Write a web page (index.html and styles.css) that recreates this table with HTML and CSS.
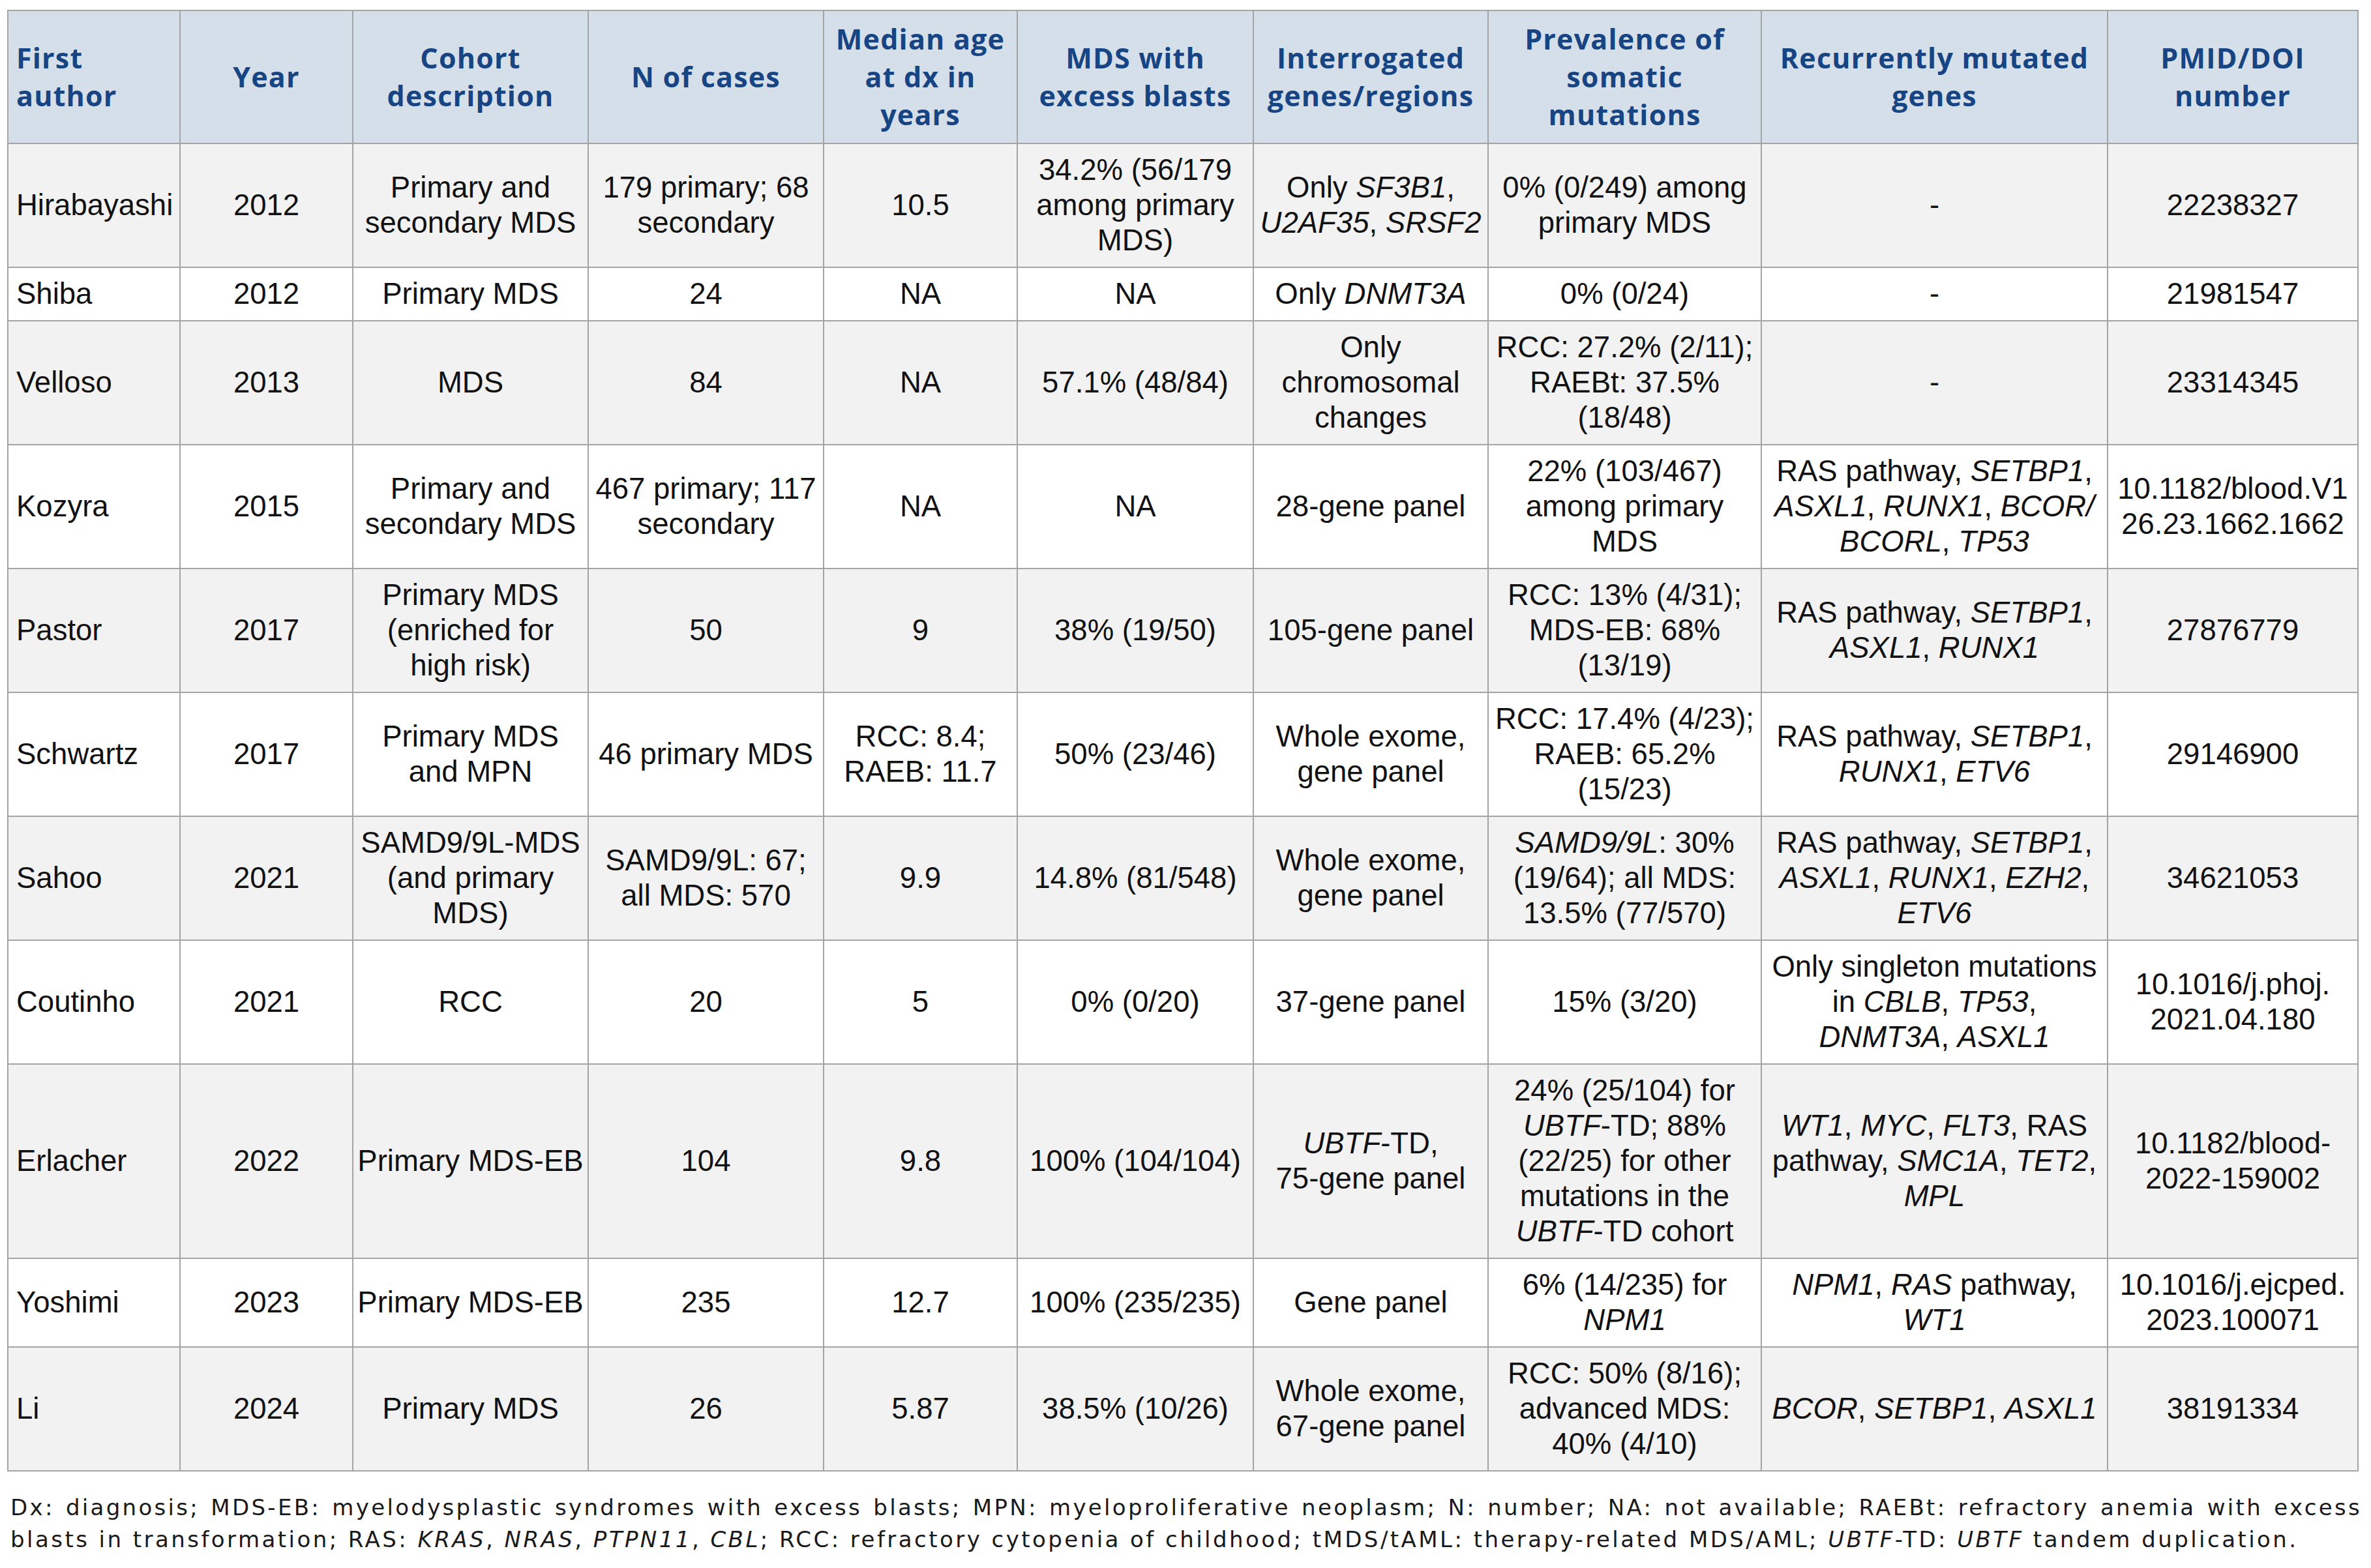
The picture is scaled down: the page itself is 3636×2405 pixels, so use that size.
FILE: index.html
```html
<!DOCTYPE html>
<html lang="en">
<head>
<meta charset="utf-8">
<title>Studies of somatic mutations in pediatric MDS</title>
<link rel="stylesheet" href="styles.css">
</head>
<body>
<div class="page">
<table class="data">
  <colgroup>
    <col class="c1"><col class="c2"><col class="c3"><col class="c4"><col class="c5">
    <col class="c6"><col class="c7"><col class="c8"><col class="c9"><col class="c10">
  </colgroup>
  <thead>
    <tr>
      <th class="left">First<br>author</th>
      <th>Year</th>
      <th>Cohort<br>description</th>
      <th>N of cases</th>
      <th>Median age<br>at dx in<br>years</th>
      <th>MDS with<br>excess blasts</th>
      <th>Interrogated<br>genes/regions</th>
      <th>Prevalence of<br>somatic<br>mutations</th>
      <th>Recurrently mutated<br>genes</th>
      <th>PMID/DOI<br>number</th>
    </tr>
  </thead>
  <tbody>
    <tr>
      <td class="left">Hirabayashi</td>
      <td>2012</td>
      <td>Primary and<br>secondary MDS</td>
      <td>179 primary; 68<br>secondary</td>
      <td>10.5</td>
      <td>34.2% (56/179<br>among primary<br>MDS)</td>
      <td>Only <i>SF3B1</i>,<br><i>U2AF35</i>, <i>SRSF2</i></td>
      <td>0% (0/249) among<br>primary MDS</td>
      <td>-</td>
      <td>22238327</td>
    </tr>
    <tr>
      <td class="left">Shiba</td>
      <td>2012</td>
      <td>Primary MDS</td>
      <td>24</td>
      <td>NA</td>
      <td>NA</td>
      <td>Only <i>DNMT3A</i></td>
      <td>0% (0/24)</td>
      <td>-</td>
      <td>21981547</td>
    </tr>
    <tr>
      <td class="left">Velloso</td>
      <td>2013</td>
      <td>MDS</td>
      <td>84</td>
      <td>NA</td>
      <td>57.1% (48/84)</td>
      <td>Only<br>chromosomal<br>changes</td>
      <td>RCC: 27.2% (2/11);<br>RAEBt: 37.5%<br>(18/48)</td>
      <td>-</td>
      <td>23314345</td>
    </tr>
    <tr>
      <td class="left">Kozyra</td>
      <td>2015</td>
      <td>Primary and<br>secondary MDS</td>
      <td>467 primary; 117<br>secondary</td>
      <td>NA</td>
      <td>NA</td>
      <td>28-gene panel</td>
      <td>22% (103/467)<br>among primary<br>MDS</td>
      <td>RAS pathway, <i>SETBP1</i>,<br><i>ASXL1</i>, <i>RUNX1</i>, <i>BCOR/</i><br><i>BCORL</i>, <i>TP53</i></td>
      <td>10.1182/blood.V1<br>26.23.1662.1662</td>
    </tr>
    <tr>
      <td class="left">Pastor</td>
      <td>2017</td>
      <td>Primary MDS<br>(enriched for<br>high risk)</td>
      <td>50</td>
      <td>9</td>
      <td>38% (19/50)</td>
      <td>105-gene panel</td>
      <td>RCC: 13% (4/31);<br>MDS-EB: 68%<br>(13/19)</td>
      <td>RAS pathway, <i>SETBP1</i>,<br><i>ASXL1</i>, <i>RUNX1</i></td>
      <td>27876779</td>
    </tr>
    <tr>
      <td class="left">Schwartz</td>
      <td>2017</td>
      <td>Primary MDS<br>and MPN</td>
      <td>46 primary MDS</td>
      <td>RCC: 8.4;<br>RAEB: 11.7</td>
      <td>50% (23/46)</td>
      <td>Whole exome,<br>gene panel</td>
      <td>RCC: 17.4% (4/23);<br>RAEB: 65.2%<br>(15/23)</td>
      <td>RAS pathway, <i>SETBP1</i>,<br><i>RUNX1</i>, <i>ETV6</i></td>
      <td>29146900</td>
    </tr>
    <tr>
      <td class="left">Sahoo</td>
      <td>2021</td>
      <td>SAMD9/9L-MDS<br>(and primary<br>MDS)</td>
      <td>SAMD9/9L: 67;<br>all MDS: 570</td>
      <td>9.9</td>
      <td>14.8% (81/548)</td>
      <td>Whole exome,<br>gene panel</td>
      <td><i>SAMD9/9L</i>: 30%<br>(19/64); all MDS:<br>13.5% (77/570)</td>
      <td>RAS pathway, <i>SETBP1</i>,<br><i>ASXL1</i>, <i>RUNX1</i>, <i>EZH2</i>,<br><i>ETV6</i></td>
      <td>34621053</td>
    </tr>
    <tr>
      <td class="left">Coutinho</td>
      <td>2021</td>
      <td>RCC</td>
      <td>20</td>
      <td>5</td>
      <td>0% (0/20)</td>
      <td>37-gene panel</td>
      <td>15% (3/20)</td>
      <td>Only singleton mutations<br>in <i>CBLB</i>, <i>TP53</i>,<br><i>DNMT3A</i>, <i>ASXL1</i></td>
      <td>10.1016/j.phoj.<br>2021.04.180</td>
    </tr>
    <tr>
      <td class="left">Erlacher</td>
      <td>2022</td>
      <td>Primary MDS-EB</td>
      <td>104</td>
      <td>9.8</td>
      <td>100% (104/104)</td>
      <td><i>UBTF</i>-TD,<br>75-gene panel</td>
      <td>24% (25/104) for<br><i>UBTF</i>-TD; 88%<br>(22/25) for other<br>mutations in the<br><i>UBTF</i>-TD cohort</td>
      <td><i>WT1</i>, <i>MYC</i>, <i>FLT3</i>, RAS<br>pathway, <i>SMC1A</i>, <i>TET2</i>,<br><i>MPL</i></td>
      <td>10.1182/blood-<br>2022-159002</td>
    </tr>
    <tr>
      <td class="left">Yoshimi</td>
      <td>2023</td>
      <td>Primary MDS-EB</td>
      <td>235</td>
      <td>12.7</td>
      <td>100% (235/235)</td>
      <td>Gene panel</td>
      <td>6% (14/235) for<br><i>NPM1</i></td>
      <td><i>NPM1</i>, <i>RAS</i> pathway,<br><i>WT1</i></td>
      <td>10.1016/j.ejcped.<br>2023.100071</td>
    </tr>
    <tr>
      <td class="left">Li</td>
      <td>2024</td>
      <td>Primary MDS</td>
      <td>26</td>
      <td>5.87</td>
      <td>38.5% (10/26)</td>
      <td>Whole exome,<br>67-gene panel</td>
      <td>RCC: 50% (8/16);<br>advanced MDS:<br>40% (4/10)</td>
      <td><i>BCOR</i>, <i>SETBP1</i>, <i>ASXL1</i></td>
      <td>38191334</td>
    </tr>
  </tbody>
</table>
<div class="note">
  <span class="note-line first">Dx: diagnosis; MDS-EB: myelodysplastic syndromes with excess blasts; MPN: myeloproliferative neoplasm; N: number; NA: not available; RAEBt: refractory anemia with excess</span>
  <span class="note-line second">blasts in transformation; RAS: <i>KRAS</i>, <i>NRAS</i>, <i>PTPN11</i>, <i>CBL</i>; RCC: refractory cytopenia of childhood; tMDS/tAML: therapy-related MDS/AML; <i>UBTF</i>-TD: <i>UBTF</i> tandem duplication.</span>
</div>
</div>
</body>
</html>
```

FILE: styles.css
```css
html, body {
  margin: 0;
  padding: 0;
  background: #ffffff;
}

.page {
  padding: 15px 0 0 11px;
}

.data {
  border-collapse: collapse;
  table-layout: fixed;
  width: 3604px;
  font-family: "Liberation Sans", Arial, sans-serif;
  font-size: 45.5px;
  line-height: 54px;
  color: #111111;
}

.c1 { width: 264px; }
.c2 { width: 265px; }
.c3 { width: 361px; }
.c4 { width: 361px; }
.c5 { width: 297px; }
.c6 { width: 362px; }
.c7 { width: 360px; }
.c8 { width: 419px; }
.c9 { width: 531px; }
.c10 { width: 384px; }

.data th,
.data td {
  border: 2px solid #a4a4a4;
  padding: 13px 6px;
  text-align: center;
  vertical-align: middle;
  white-space: nowrap;
}

.data th {
  padding-top: 14px;
  padding-bottom: 14px;
  background: #d5dfe9;
  color: #174483;
  font-family: "Open Sans", "Noto Sans", sans-serif;
  font-weight: 700;
  font-size: 43px;
  line-height: 58px;
  letter-spacing: 1.2px;
}

.data th.left,
.data td.left {
  text-align: left;
  padding-left: 12px;
}

.data tbody tr:nth-child(odd) td {
  background: #f2f2f2;
}

.data tbody tr:nth-child(even) td {
  background: #ffffff;
}

.data i {
  font-style: italic;
}

.note {
  margin: 31px 0 0 5px;
  width: 3606px;
  font-family: "DejaVu Sans", sans-serif;
  font-size: 34px;
  line-height: 49px;
  letter-spacing: 3.3px;
  color: #1a1a1a;
}

.note-line {
  display: block;
  white-space: nowrap;
}

.note-line.first {
  text-align: justify;
  text-align-last: justify;
}

.note-line.second {
  letter-spacing: 3.45px;
}
```
